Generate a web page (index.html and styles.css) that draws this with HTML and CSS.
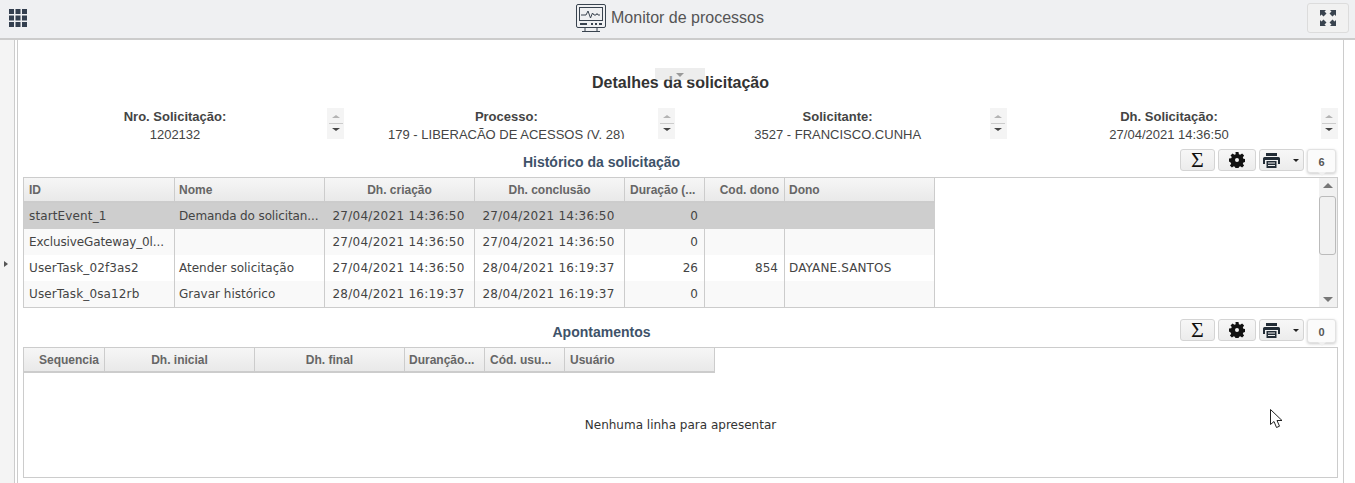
FILE: index.html
```html
<!DOCTYPE html>
<html lang="pt-BR">
<head>
  <meta charset="UTF-8">
  <title>Monitor de processos</title>
  <link rel="stylesheet" href="styles.css">
</head>
<body>
  <!-- Top bar -->
  <header class="topbar">
    <svg class="apps-icon" width="18" height="18" viewBox="0 0 18 18">
      <g fill="#333f4f">
        <rect x="0" y="0" width="5" height="5"/><rect x="6.500" y="0" width="5" height="5"/><rect x="13" y="0" width="5" height="5"/>
        <rect x="0" y="6.500" width="5" height="5"/><rect x="6.500" y="6.500" width="5" height="5"/><rect x="13" y="6.500" width="5" height="5"/>
        <rect x="0" y="13" width="5" height="5"/><rect x="6.500" y="13" width="5" height="5"/><rect x="13" y="13" width="5" height="5"/>
      </g>
    </svg>
    <div class="topbar-title">
      <svg width="30" height="28" viewBox="0 0 30 28" fill="none" stroke="#39434f">
        <rect x="0.500" y="0.500" width="29" height="23" rx="1.500" stroke-width="1"/>
        <rect x="3.500" y="3.500" width="23" height="13" stroke-width="1"/>
        <path d="M5 11h5l2-4 2.500 7 2-5 1.500 2h2l1-1.500 1 1.500h2" stroke-width="1"/>
        <path d="M4 20h7M15 20h2M19 20h2M23 20h3" stroke-width="2"/>
        <path d="M9 24v3M21 24v3M6 27.500h18" stroke-width="1"/>
      </svg>
      <span>Monitor de processos</span>
    </div>
    <button class="expand-btn" type="button">
      <svg width="16" height="16" viewBox="0 0 16 16" fill="#39434f">
        <path d="M0 0h6L4.500 1.500 6.500 3.500 3.500 6.500 1.500 4.500 0 6z"/>
        <path d="M16 0v6L14.500 4.500 12.500 6.500 9.500 3.500 11.500 1.500 10 0z"/>
        <path d="M0 16v-6l1.500 1.500 2-2 3 3-2 2L6 16z"/>
        <path d="M16 16h-6l1.500-1.500-2-2 3-3 2 2L16 10z"/>
      </svg>
    </button>
  </header>

  <div class="layout">
    <aside class="side-strip"><span class="side-arrow"></span></aside>

    <main class="frame">
      <div class="collapse-handle"><span></span></div>
      <h1 class="page-title">Detalhes da solicitação</h1>

      <!-- Header fields -->
      <section class="fields">
        <div class="field">
          <div class="field-text"><strong>Nro. Solicitação:</strong><span>1202132</span></div>
          <div class="spinner"><i class="up"></i><span class="spinner-line"></span><i class="down"></i></div>
        </div>
        <div class="field">
          <div class="field-text"><strong>Processo:</strong><span>179 - LIBERAÇÃO DE ACESSOS (V. 28)</span></div>
          <div class="spinner"><i class="up"></i><span class="spinner-line"></span><i class="down"></i></div>
        </div>
        <div class="field">
          <div class="field-text"><strong>Solicitante:</strong><span>3527 - FRANCISCO.CUNHA</span></div>
          <div class="spinner"><i class="up"></i><span class="spinner-line"></span><i class="down"></i></div>
        </div>
        <div class="field">
          <div class="field-text"><strong>Dh. Solicitação:</strong><span>27/04/2021 14:36:50</span></div>
          <div class="spinner"><i class="up"></i><span class="spinner-line"></span><i class="down"></i></div>
        </div>
      </section>

      <!-- Historico -->
      <section class="panel">
        <div class="panel-head">
          <h2>Histórico da solicitação</h2>
          <div class="toolbar">
            <button class="tool tool-sum" type="button">Σ</button>
            <button class="tool tool-gear" type="button">
              <svg width="16" height="16" viewBox="0 0 16 16"><path fill="#111" fill-rule="evenodd" d="M6.500 0h3l.4 2.200 1.300.6L13.100 1.500l2 2-1.300 1.900.6 1.300 2.200.4v2.900l-2.200.4-.6 1.300 1.300 1.900-2 2-1.900-1.300-1.300.6-.4 2.200h-3l-.4-2.200-1.300-.6-1.900 1.300-2-2 1.300-1.900-.6-1.300L0 9.500V6.600l2.200-.4.600-1.300L1.500 3.500l2-2 1.900 1.300 1.300-.6zM8 6a2 2 0 1 0 0 4 2 2 0 0 0 0-4z"/></svg>
            </button>
            <button class="tool tool-print" type="button">
              <svg width="17" height="15" viewBox="0 0 17 15"><path fill="#222c36" fill-rule="evenodd" d="M3 0h11v3H3zM1.500 4h14A1.500 1.500 0 0 1 17 5.500V11h-2V7H2v4H0V5.500A1.500 1.500 0 0 1 1.500 4zM3.500 8h10v7h-10zm1.500 1.500v1h7v-1zm0 2.500v1h7v-1z"/></svg>
              <i class="caret"></i>
            </button>
            <div class="count">6</div>
          </div>
        </div>
        <div class="grid">
          <table class="grid-table">
            <colgroup>
              <col class="w151"><col class="w150"><col class="w150"><col class="w150"><col class="w80"><col class="w80"><col class="w150">
            </colgroup>
            <thead>
              <tr>
                <th>ID</th><th class="tight">Nome</th><th class="center">Dh. criação</th><th class="center">Dh. conclusão</th><th>Duração (...</th><th class="right">Cod. dono</th><th class="tight">Dono</th>
              </tr>
            </thead>
            <tbody>
              <tr class="selected">
                <td class="wide">startEvent_1</td><td class="trunc">Demanda do solicitan...</td><td class="center date">27/04/2021 14:36:50</td><td class="center date">27/04/2021 14:36:50</td><td class="right">0</td><td></td><td></td>
              </tr>
              <tr class="odd">
                <td class="trunc">ExclusiveGateway_0l...</td><td></td><td class="center date">27/04/2021 14:36:50</td><td class="center date">27/04/2021 14:36:50</td><td class="right">0</td><td></td><td></td>
              </tr>
              <tr>
                <td class="wide">UserTask_02f3as2</td><td>Atender solicitação</td><td class="center date">27/04/2021 14:36:50</td><td class="center date">28/04/2021 16:19:37</td><td class="right">26</td><td class="right">854</td><td class="wide">DAYANE.SANTOS</td>
              </tr>
              <tr class="odd">
                <td class="wide">UserTask_0sa12rb</td><td>Gravar histórico</td><td class="center date">28/04/2021 16:19:37</td><td class="center date">28/04/2021 16:19:37</td><td class="right">0</td><td></td><td></td>
              </tr>
            </tbody>
          </table>
          <div class="scrollbar">
            <i class="scroll-up"></i>
            <div class="scroll-thumb"></div>
            <i class="scroll-down"></i>
          </div>
        </div>
      </section>

      <!-- Apontamentos -->
      <section class="panel">
        <div class="panel-head">
          <h2>Apontamentos</h2>
          <div class="toolbar">
            <button class="tool tool-sum" type="button">Σ</button>
            <button class="tool tool-gear" type="button">
              <svg width="16" height="16" viewBox="0 0 16 16"><path fill="#111" fill-rule="evenodd" d="M6.500 0h3l.4 2.200 1.300.6L13.100 1.500l2 2-1.300 1.900.6 1.300 2.200.4v2.900l-2.200.4-.6 1.300 1.300 1.900-2 2-1.900-1.300-1.300.6-.4 2.200h-3l-.4-2.200-1.300-.6-1.900 1.300-2-2 1.300-1.900-.6-1.300L0 9.500V6.600l2.200-.4.600-1.300L1.500 3.500l2-2 1.900 1.300 1.300-.6zM8 6a2 2 0 1 0 0 4 2 2 0 0 0 0-4z"/></svg>
            </button>
            <button class="tool tool-print" type="button">
              <svg width="17" height="15" viewBox="0 0 17 15"><path fill="#222c36" fill-rule="evenodd" d="M3 0h11v3H3zM1.500 4h14A1.500 1.500 0 0 1 17 5.500V11h-2V7H2v4H0V5.500A1.500 1.500 0 0 1 1.500 4zM3.500 8h10v7h-10zm1.500 1.500v1h7v-1zm0 2.500v1h7v-1z"/></svg>
              <i class="caret"></i>
            </button>
            <div class="count">0</div>
          </div>
        </div>
        <div class="grid grid-empty">
          <table class="grid-table">
            <colgroup>
              <col class="w81"><col class="w150"><col class="w150"><col class="w80"><col class="w80"><col class="w150">
            </colgroup>
            <thead>
              <tr>
                <th class="right">Sequencia</th><th class="center">Dh. inicial</th><th class="center">Dh. final</th><th class="tight">Duranção...</th><th>Cód. usu...</th><th>Usuário</th>
              </tr>
            </thead>
          </table>
          <div class="empty-msg">Nenhuma linha para apresentar</div>
        </div>
      </section>
    </main>
  </div>

  <!-- Mouse pointer caught in the capture -->
  <svg class="pointer" width="13" height="20" viewBox="0 0 13 20">
    <path d="M.5.500v15l3.500-3 2.500 6 3-1.300-2.500-5.700h5z" fill="#fff" stroke="#222" stroke-width="1"/>
  </svg>
</body>
</html>
```

FILE: styles.css
```css
/* Page */
html, body {
  height: 483px;
  overflow: hidden;
}

body {
  margin: 0;
  background-color: #fff;
  color: #333;
  font-family: "Liberation Sans", Arial, sans-serif;
  font-size: 12px;
}

/* Top bar */
.topbar {
  box-sizing: border-box;
  height: 40px;
  display: flex;
  align-items: center;
  padding: 0 6px 2px 9px;
  background-color: #eff0f2;
  border-bottom: 2px solid #ccc;
}

.apps-icon {
  flex: none;
}

.topbar-title {
  flex: 1;
  display: flex;
  align-items: center;
  justify-content: center;
  gap: 5px;
  padding-left: 6px;
  font-size: 16px;
  color: #555;
}

.expand-btn {
  width: 42px;
  height: 30px;
  display: flex;
  align-items: center;
  justify-content: center;
  padding: 0;
  background-color: #f1f1f1;
  border: 1px solid #dcdcdc;
  border-radius: 3px;
}

/* Body layout */
.layout {
  display: flex;
  height: 443px;
}

.side-strip {
  box-sizing: border-box;
  flex: none;
  width: 15px;
  display: flex;
  align-items: center;
  justify-content: center;
  padding-right: 6px;
  padding-top: 4px;
  background-color: #f4f4f4;
  border-right: 1px solid #ccc;
}

.side-arrow {
  width: 0;
  height: 0;
  margin-left: 3px;
  border-left: 4px solid #555;
  border-top: 3px solid transparent;
  border-bottom: 3px solid transparent;
}

.frame {
  position: relative;
  box-sizing: border-box;
  width: 1327px;
  margin-left: 2px;
  padding: 0 5px;
  border-left: 1px solid #ccc;
  border-right: 1px solid #ccc;
}

.collapse-handle {
  position: absolute;
  left: 637px;
  top: 28px;
  width: 50px;
  height: 12px;
  display: flex;
  justify-content: center;
  background-color: rgba(225, 225, 225, 0.6);
  border-radius: 0 0 3px 3px;
}

.collapse-handle span {
  width: 0;
  height: 0;
  margin-top: 5px;
  border-top: 4px solid #999;
  border-left: 4px solid transparent;
  border-right: 4px solid transparent;
}

.page-title {
  margin: 33px 0 16px;
  font-size: 16px;
  line-height: 19px;
  font-weight: bold;
  text-align: center;
  color: #333;
}

/* Fields row */
.fields {
  display: grid;
  grid-template-columns: repeat(4, 331.33px);
  height: 31px;
}

.field {
  display: flex;
}

/* The values get cut at the bottom edge, the scroll box is too short */
.field-text {
  width: 304px;
  height: 31px;
  overflow: hidden;
  display: flex;
  flex-direction: column;
  align-items: center;
  font-size: 13px;
  line-height: 18px;
  color: #444;
}

.spinner {
  width: 17px;
  height: 31px;
  display: flex;
  flex-direction: column;
  align-items: center;
  background-color: #f4f4f4;
}

.spinner i {
  display: block;
  width: 0;
  height: 0;
  border-left: 4px solid transparent;
  border-right: 4px solid transparent;
}

.spinner .up {
  margin-top: 7px;
  border-bottom: 3px solid #b4b4b4;
}

.spinner-line {
  width: 14px;
  height: 1px;
  margin: 5px 0 4px;
  background-color: #ccc;
}

.spinner .down {
  border-top: 3px solid #444;
}

/* Panels */
.panel-head {
  height: 28px;
  margin-top: 10px;
  display: flex;
  align-items: flex-start;
}

.panel-head h2 {
  flex: 1;
  margin: 5px 0 0;
  font-size: 14px;
  line-height: 16px;
  font-weight: bold;
  text-align: center;
  color: #3e5269;
}

.panel + .panel .panel-head {
  margin-top: 11px;
}

.toolbar {
  display: flex;
  gap: 3px;
  margin-right: 2px;
}

.tool {
  box-sizing: border-box;
  height: 22px;
  display: flex;
  align-items: center;
  justify-content: center;
  padding: 0;
  background: linear-gradient(#f7f7f7, #ececec);
  border: 1px solid #d4d4d4;
  border-radius: 3px;
}

.tool-sum {
  width: 35px;
  font-family: "Liberation Serif", serif;
  font-size: 22px;
  color: #111;
}

.tool-gear {
  width: 38px;
}

.tool-print {
  width: 45px;
  justify-content: flex-start;
  padding-left: 3px;
  gap: 13px;
}

.caret {
  width: 0;
  height: 0;
  border-top: 3px solid #222;
  border-left: 3px solid transparent;
  border-right: 3px solid transparent;
}

.count {
  position: relative;
  z-index: 1;
  box-sizing: border-box;
  width: 29px;
  height: 24px;
  line-height: 24px;
  text-align: center;
  font-size: 11px;
  font-weight: bold;
  color: #555;
  background-color: #fbfbfb;
  border: 1px solid #e2e2e2;
  border-radius: 3px;
  box-shadow: 0 1px 3px rgba(0, 0, 0, 0.2);
}

.count::after {
  content: "";
  position: absolute;
  left: 10px;
  bottom: -4px;
  width: 0;
  height: 0;
  border-top: 4px solid #f0f0f0;
  border-left: 4px solid transparent;
  border-right: 4px solid transparent;
}

/* Grids */
.grid {
  position: relative;
  box-sizing: border-box;
  height: 131px;
  border: 1px solid #ccc;
}

.grid-empty {
  display: flex;
  flex-direction: column;
}

.grid-table {
  table-layout: fixed;
  border-collapse: separate;
  border-spacing: 0;
  width: 911px;
}

.grid-empty .grid-table {
  width: 691px;
}

.w151 { width: 151px; }
.w150 { width: 150px; }
.w81 { width: 81px; }
.w80 { width: 80px; }

.grid-table th {
  box-sizing: border-box;
  height: 25px;
  padding: 0 5px 0 5px;
  font-size: 12px;
  font-weight: bold;
  text-align: left;
  color: #666;
  white-space: nowrap;
  overflow: hidden;
  background: linear-gradient(#f6f6f6, #e9e9e9);
  border-right: 1px solid #ccc;
  border-bottom: 2px solid #ccc;
}

.grid-table th.tight {
  padding-left: 4px;
}

.grid-table td {
  box-sizing: border-box;
  height: 26px;
  padding: 0 6px 0 4px;
  font-family: "DejaVu Sans", Verdana, sans-serif;
  font-size: 12px;
  color: #444;
  white-space: nowrap;
  overflow: hidden;
  border-right: 1px solid #ccc;
}

.grid-table td:first-child {
  padding-left: 5px;
}

.grid-table td.date { letter-spacing: 0.28px; }
.grid-table td.wide { letter-spacing: 0.13px; }
.grid-table td.trunc { letter-spacing: -0.12px; }

.grid-table tr.selected td {
  background-color: #cecece;
  border-right-color: #cecece;
}

.grid-table tr.odd td {
  background-color: #f9f9f9;
}

.grid-table .center { text-align: center; }
.grid-table .right { text-align: right; }

.empty-msg {
  flex: 1;
  display: flex;
  align-items: center;
  justify-content: center;
  font-family: "DejaVu Sans", Verdana, sans-serif;
  font-size: 12px;
  color: #333;
}

/* Fake scrollbar */
.scrollbar {
  position: absolute;
  top: 0;
  right: 0;
  bottom: 0;
  width: 18px;
  background-color: #f1f1f1;
}

.scroll-up,
.scroll-down {
  position: absolute;
  left: 4px;
  width: 0;
  height: 0;
  border-left: 5px solid transparent;
  border-right: 5px solid transparent;
}

.scroll-up {
  top: 5px;
  border-bottom: 5px solid #777;
}

.scroll-down {
  bottom: 5px;
  border-top: 5px solid #777;
}

.scroll-thumb {
  position: absolute;
  top: 18px;
  left: 0;
  box-sizing: border-box;
  width: 17px;
  height: 59px;
  background-color: #f1f1f1;
  border: 1px solid #bbb;
  border-radius: 3px;
}

/* Mouse pointer */
.pointer {
  position: absolute;
  left: 1270px;
  top: 409px;
}
```
